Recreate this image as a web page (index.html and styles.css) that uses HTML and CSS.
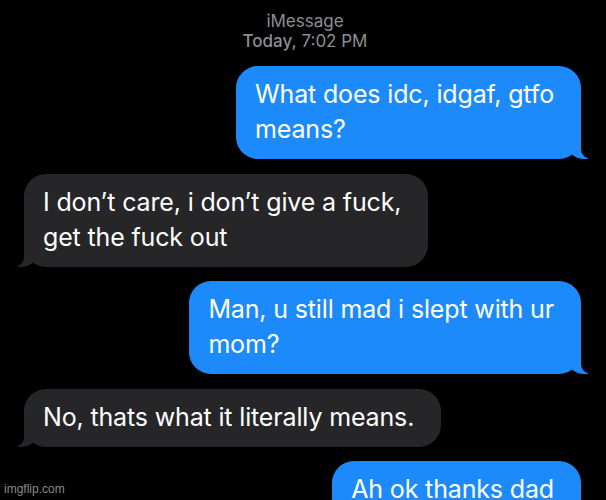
FILE: index.html
```html
<!DOCTYPE html>
<html lang="en">
<head>
<meta charset="utf-8">
<title>iMessage</title>
<link rel="stylesheet" href="styles.css">
</head>
<body>
<div class="screen">
  <header class="thread-head">
    <div class="service">iMessage</div>
    <div class="stamp"><span class="day">Today,</span> 7:02 PM</div>
  </header>
  <main class="thread">
    <div class="msg sent">What does idc, idgaf, gtfo<br>means?</div>
    <div class="msg received">I don’t care, i don’t give a fuck,<br>get the fuck out</div>
    <div class="msg sent">Man, u still mad i slept with ur<br>mom?</div>
    <div class="msg received">No, thats what it literally means.</div>
    <div class="msg sent">Ah ok thanks dad</div>
  </main>
  <div class="watermark">imgflip.com</div>
</div>
</body>
</html>
```
FILE: styles.css
```css
html, body {
  margin: 0;
  padding: 0;
  background: #000;
}
.screen {
  position: relative;
  width: 606px;
  height: 500px;
  overflow: hidden;
  background: #000;
  font-family: Inter, "Noto Sans", "Liberation Sans", sans-serif;
}
.thread-head {
  padding-top: 11px;
  text-align: center;
  color: #8d8d92;
  font-size: 17px;
  line-height: 20px;
  padding-left: 4px;
}
.stamp .day {
  font-weight: 500;
}
.thread {
  display: flex;
  flex-direction: column;
  gap: 14.5px;
  padding: 15px 25px 0 24px;
}
.msg {
  position: relative;
  color: #fff;
  font-size: 25px;
  line-height: 35px;
  padding: 11px 27px 12px 19px;
  border-radius: 22px;
  white-space: nowrap;
  letter-spacing: -0.15px;
}
.sent {
  align-self: flex-end;
  background: #1d8afc;
}
.received {
  align-self: flex-start;
  background: #262628;
}
.sent::before,
.received::before {
  content: "";
  position: absolute;
  bottom: 0;
  height: 22px;
  width: 20px;
}
.sent::after,
.received::after {
  content: "";
  position: absolute;
  bottom: 0;
  height: 22px;
  width: 26px;
  background: #000;
}
.sent::before {
  right: -7px;
  background: #1d8afc;
  border-bottom-left-radius: 16px 14px;
}
.sent::after {
  right: -26px;
  border-bottom-left-radius: 10px;
}
.received::before {
  left: -7px;
  background: #262628;
  border-bottom-right-radius: 16px 14px;
}
.received::after {
  left: -26px;
  border-bottom-right-radius: 10px;
}
.watermark {
  position: absolute;
  left: 4px;
  bottom: 4px;
  color: #8a8a8a;
  font-family: "Liberation Sans", Arial, sans-serif;
  font-size: 12px;
  line-height: 14px;
}
```
